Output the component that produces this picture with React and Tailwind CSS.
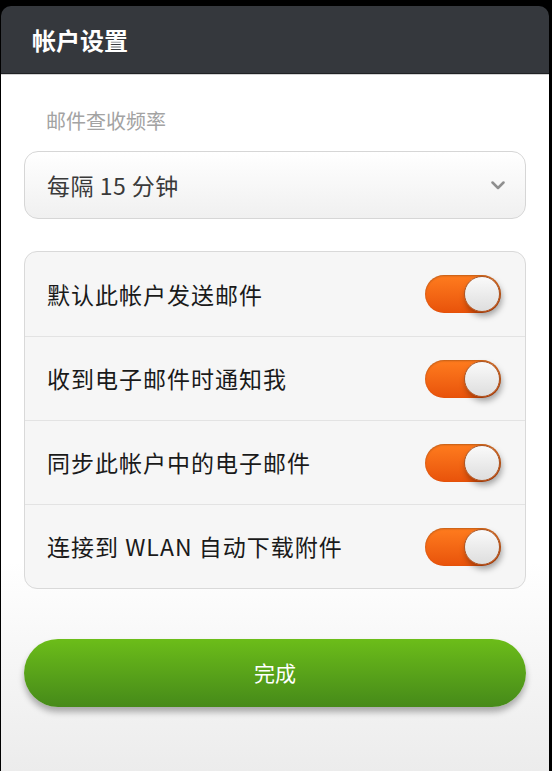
import React, { useState } from 'react';

const font = { fontFamily: '"Noto Sans CJK SC", "Noto Sans", sans-serif' };

const Toggle = ({ on, onClick }) => (
  <button
    onClick={onClick}
    className={`relative w-[76px] h-[38px] rounded-full shrink-0 shadow-[inset_0_1px_2px_rgba(0,0,0,0.25)] ${on ? 'bg-gradient-to-b from-[#ff7c1e] to-[#e8520a]' : 'bg-[#d9d9d9]'}`}
  >
    <span
      className={`absolute top-[1px] w-[36px] h-[36px] rounded-full bg-gradient-to-b from-[#fafafa] to-[#dedede] border border-[#a9582a] shadow-[2px_4px_6px_rgba(0,0,0,0.35)] ${on ? 'right-[1px]' : 'left-[1px]'}`}
    />
  </button>
);

const rows = [
  '默认此帐户发送邮件',
  '收到电子邮件时通知我',
  '同步此帐户中的电子邮件',
  '连接到 WLAN 自动下载附件',
];

export default function App() {
  const [checks, setChecks] = useState([true, true, true, true]);

  const flip = (i) => setChecks(checks.map((c, j) => (j === i ? !c : c)));

  return (
    <div className="w-[552px] h-[771px] bg-black flex flex-col pt-[6px]" style={font}>
      <div className="flex-1 flex flex-col ml-[1px] mr-[3px] rounded-t-[10px] overflow-hidden">
        <div className="h-[68px] bg-[#35383d] flex items-center pl-[31px] border-b border-[#1f2124]">
          <h1 className="text-white text-[24px] font-bold leading-none">帐户设置</h1>
        </div>
        <div className="h-[1px] bg-[#d4d4d4]" />
        <div className="flex-1 bg-gradient-to-b from-white via-white via-70% to-[#ececec] px-[23px] pt-[32px] flex flex-col">
          <p className="text-[#a3a3a3] text-[20px] leading-[28px] pl-[22px]">邮件查收频率</p>
          <div className="mt-[16px] h-[68px] rounded-[14px] border border-[#d6d6d6] bg-gradient-to-b from-white to-[#f0f0f0] flex items-center justify-between pl-[22px] pr-[20px]">
            <span className="text-[#3a3a3a] text-[23px] tracking-[0.5px]">每隔 15 分钟</span>
            <svg width="14" height="9" viewBox="0 0 14 9" fill="none">
              <path d="M1.5 1.5 L7 7 L12.5 1.5" stroke="#8f8f8f" strokeWidth="2.5" strokeLinecap="round" strokeLinejoin="round" />
            </svg>
          </div>
          <div className="mt-[32px] rounded-[13px] border border-[#d9d9d9] bg-[#f6f6f6] flex flex-col">
            {rows.map((label, i) => (
              <div
                key={label}
                className={`h-[84px] flex items-center justify-between pl-[22px] pr-[24px] ${i > 0 ? 'border-t border-[#e3e3e3]' : ''}`}
              >
                <span className="text-[#1a1a1a] text-[23px] tracking-[1px]">{label}</span>
                <Toggle on={checks[i]} onClick={() => flip(i)} />
              </div>
            ))}
          </div>
          <button className="mt-[50px] h-[68px] rounded-full bg-gradient-to-b from-[#6cbd19] to-[#468a19] text-white text-[21px] shadow-[0_5px_6px_rgba(0,0,0,0.3)]">
            完成
          </button>
        </div>
      </div>
    </div>
  );
}
